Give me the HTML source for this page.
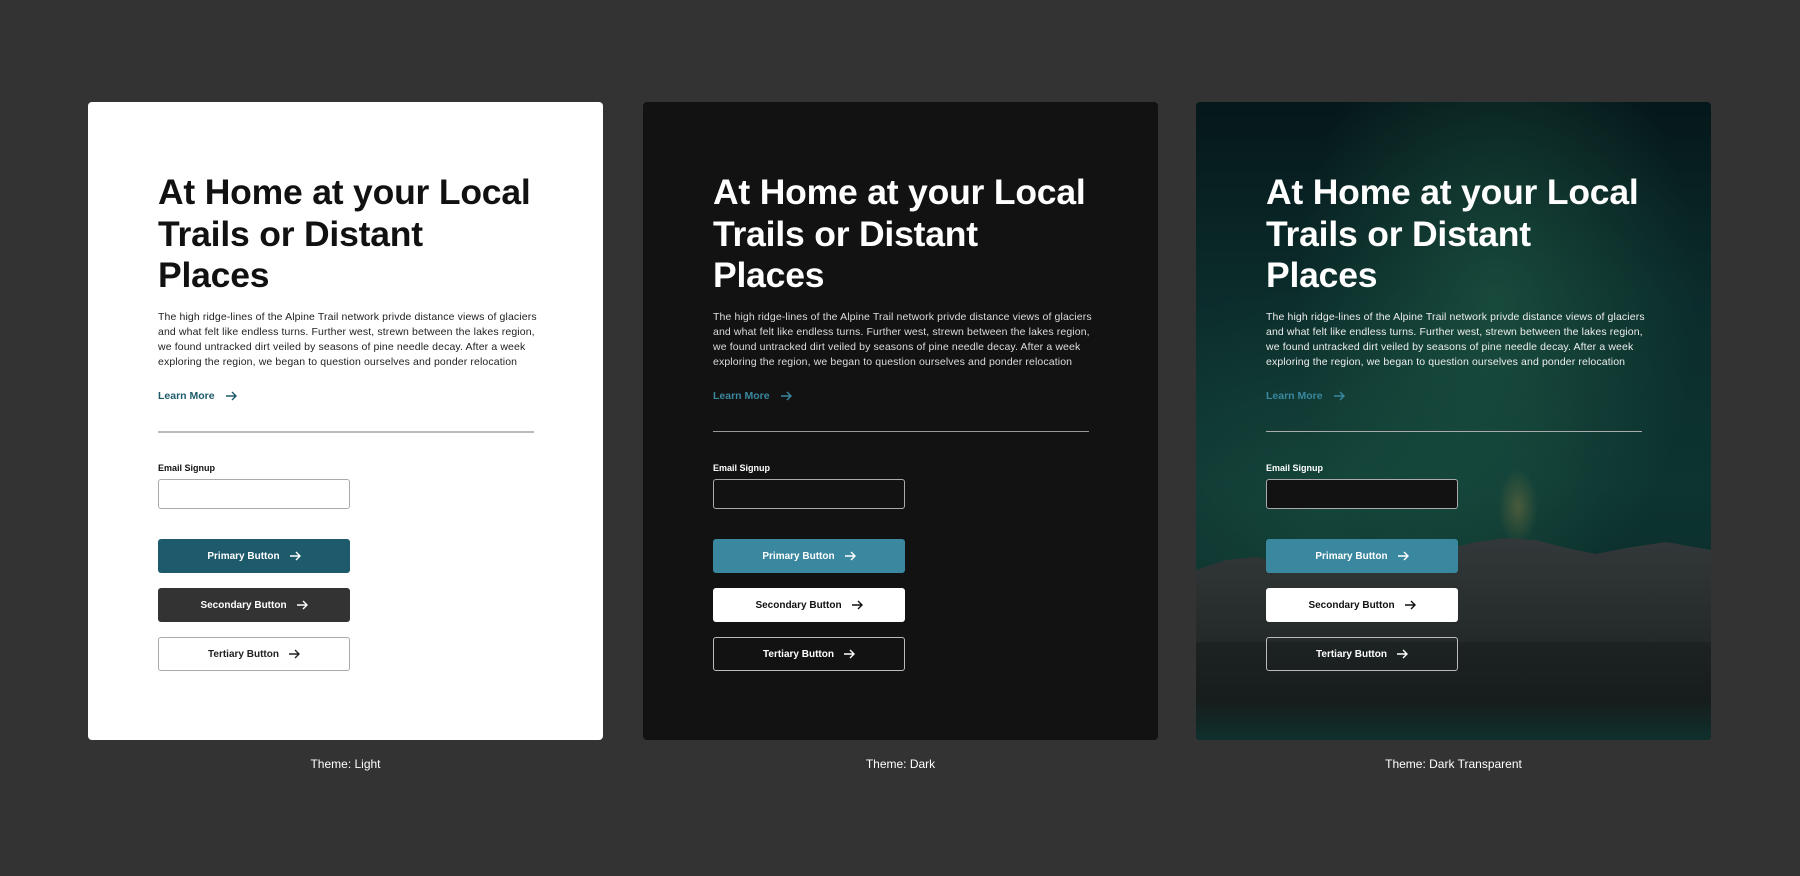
<!DOCTYPE html>
<html><head><meta charset="utf-8"><style>
*{margin:0;padding:0;box-sizing:border-box}
body{width:1800px;height:876px;background:#333;font-family:"Liberation Sans",sans-serif;position:relative;overflow:hidden}
.card{position:absolute;top:102px;width:515px;height:638px;border-radius:4px;overflow:hidden}
.c1{left:88px;background:#fff;color:#111}
.c2{left:643px;background:#121212;color:#fff}
.c3{left:1196px;color:#fff;background:radial-gradient(ellipse 200px 320px at 300px 200px,rgba(40,110,80,.45),transparent),radial-gradient(ellipse 280px 220px at 130px 400px,rgba(30,90,70,.45),transparent),linear-gradient(180deg,#05171a 0%,#0b2c2b 30%,#0d3431 60%,#0a2624 100%)}
.in{position:absolute;left:70px;top:0;width:420px}
h1{position:absolute;top:70px;font-size:35.5px;line-height:41.5px;font-weight:bold;letter-spacing:-0.2px;white-space:nowrap}
p{position:absolute;top:208px;font-size:10.5px;line-height:15px;white-space:nowrap;letter-spacing:0.12px}
.lm{position:absolute;top:288px;font-size:10.5px;font-weight:bold;display:flex;align-items:center;gap:10px}
.hr{position:absolute;top:329px;width:376px;height:2px}
.lab{position:absolute;top:361px;font-size:9px;font-weight:bold}
.inp{position:absolute;top:377px;width:192px;height:30px;border-radius:3px}
.btn{position:absolute;left:0;width:192px;height:34px;border-radius:3px;font-size:10px;font-weight:bold;display:flex;align-items:center;justify-content:center;gap:9px}
.b1{top:437px}.b2{top:486px}.b3{top:535px}
.cap{position:absolute;top:757px;width:515px;text-align:center;color:#fff;font-size:12px}
svg.a{width:12px;height:10px}
</style></head><body>

<div class="card c1"><div class="in">
<h1>At Home at your Local<br>Trails or Distant<br>Places</h1>
<p style="color:#222">The high ridge-lines of the Alpine Trail network privde distance views of glaciers<br>and what felt like endless turns. Further west, strewn between the lakes region,<br>we found untracked dirt veiled by seasons of pine needle decay. After a week<br>exploring the region, we began to question ourselves and ponder relocation</p>
<div class="lm" style="color:#1d5a6c">Learn More <svg class="a" viewBox="0 0 12 10"><path d="M1 5h10M7 1l4 4-4 4" fill="none" stroke="currentColor" stroke-width="1.4"/></svg></div>
<div class="hr" style="background:#bbb"></div>
<div class="lab">Email Signup</div>
<div class="inp" style="border:1px solid #aaa;background:#fff"></div>
<div class="btn b1" style="background:#1d5a6c;color:#fff">Primary Button <svg class="a" viewBox="0 0 12 10"><path d="M1 5h10M7 1l4 4-4 4" fill="none" stroke="currentColor" stroke-width="1.4"/></svg></div>
<div class="btn b2" style="background:#333;color:#fff">Secondary Button <svg class="a" viewBox="0 0 12 10"><path d="M1 5h10M7 1l4 4-4 4" fill="none" stroke="currentColor" stroke-width="1.4"/></svg></div>
<div class="btn b3" style="background:#fff;border:1px solid #aaa;color:#222">Tertiary Button <svg class="a" viewBox="0 0 12 10"><path d="M1 5h10M7 1l4 4-4 4" fill="none" stroke="currentColor" stroke-width="1.4"/></svg></div>
</div></div>

<div class="card c2"><div class="in">
<h1>At Home at your Local<br>Trails or Distant<br>Places</h1>
<p style="color:#ddd">The high ridge-lines of the Alpine Trail network privde distance views of glaciers<br>and what felt like endless turns. Further west, strewn between the lakes region,<br>we found untracked dirt veiled by seasons of pine needle decay. After a week<br>exploring the region, we began to question ourselves and ponder relocation</p>
<div class="lm" style="color:#3a87a0">Learn More <svg class="a" viewBox="0 0 12 10"><path d="M1 5h10M7 1l4 4-4 4" fill="none" stroke="currentColor" stroke-width="1.4"/></svg></div>
<div class="hr" style="background:#999;height:1px"></div>
<div class="lab">Email Signup</div>
<div class="inp" style="border:1px solid #aaa;background:#121212"></div>
<div class="btn b1" style="background:#3a87a0;color:#fff">Primary Button <svg class="a" viewBox="0 0 12 10"><path d="M1 5h10M7 1l4 4-4 4" fill="none" stroke="currentColor" stroke-width="1.4"/></svg></div>
<div class="btn b2" style="background:#fff;color:#111">Secondary Button <svg class="a" viewBox="0 0 12 10"><path d="M1 5h10M7 1l4 4-4 4" fill="none" stroke="currentColor" stroke-width="1.4"/></svg></div>
<div class="btn b3" style="border:1px solid #bbb;color:#fff">Tertiary Button <svg class="a" viewBox="0 0 12 10"><path d="M1 5h10M7 1l4 4-4 4" fill="none" stroke="currentColor" stroke-width="1.4"/></svg></div>
</div></div>

<div class="card c3">
<svg style="position:absolute;left:0;top:0" width="515" height="638" viewBox="0 0 515 638">
<defs><linearGradient id="m" x1="0" y1="0" x2="0" y2="1"><stop offset="0" stop-color="#33383a"/><stop offset="0.5" stop-color="#242a29"/><stop offset="1" stop-color="#1a201f"/></linearGradient>
<linearGradient id="l" x1="0" y1="0" x2="0" y2="1"><stop offset="0" stop-color="#1d2322"/><stop offset="0.6" stop-color="#161d1c"/><stop offset="1" stop-color="#0f302d"/></linearGradient>
<radialGradient id="g" cx="0.5" cy="0.5" r="0.5"><stop offset="0" stop-color="#8a7a40" stop-opacity=".45"/><stop offset="1" stop-color="#8a7a40" stop-opacity="0"/></radialGradient></defs>
<ellipse cx="322" cy="405" rx="20" ry="38" fill="url(#g)"/>
<path d="M0 468 L30 458 L60 455 L90 462 L120 470 L160 466 L200 462 L240 450 L280 440 L310 436 L340 438 L370 446 L400 452 L430 446 L470 440 L515 448 L515 638 L0 638Z" fill="url(#m)"/>
<path d="M0 540 L515 540 L515 638 L0 638Z" fill="url(#l)"/>
</svg>
<div class="in">
<h1>At Home at your Local<br>Trails or Distant<br>Places</h1>
<p style="color:#eee">The high ridge-lines of the Alpine Trail network privde distance views of glaciers<br>and what felt like endless turns. Further west, strewn between the lakes region,<br>we found untracked dirt veiled by seasons of pine needle decay. After a week<br>exploring the region, we began to question ourselves and ponder relocation</p>
<div class="lm" style="color:#3a87a0">Learn More <svg class="a" viewBox="0 0 12 10"><path d="M1 5h10M7 1l4 4-4 4" fill="none" stroke="currentColor" stroke-width="1.4"/></svg></div>
<div class="hr" style="background:#aaa;height:1px"></div>
<div class="lab">Email Signup</div>
<div class="inp" style="border:1px solid #aaa;background:#121212"></div>
<div class="btn b1" style="background:#3a87a0;color:#fff">Primary Button <svg class="a" viewBox="0 0 12 10"><path d="M1 5h10M7 1l4 4-4 4" fill="none" stroke="currentColor" stroke-width="1.4"/></svg></div>
<div class="btn b2" style="background:#fff;color:#111">Secondary Button <svg class="a" viewBox="0 0 12 10"><path d="M1 5h10M7 1l4 4-4 4" fill="none" stroke="currentColor" stroke-width="1.4"/></svg></div>
<div class="btn b3" style="border:1px solid #bbb;color:#fff">Tertiary Button <svg class="a" viewBox="0 0 12 10"><path d="M1 5h10M7 1l4 4-4 4" fill="none" stroke="currentColor" stroke-width="1.4"/></svg></div>
</div></div>

<div class="cap" style="left:88px">Theme: Light</div>
<div class="cap" style="left:643px">Theme: Dark</div>
<div class="cap" style="left:1196px">Theme: Dark Transparent</div>
</body></html>
